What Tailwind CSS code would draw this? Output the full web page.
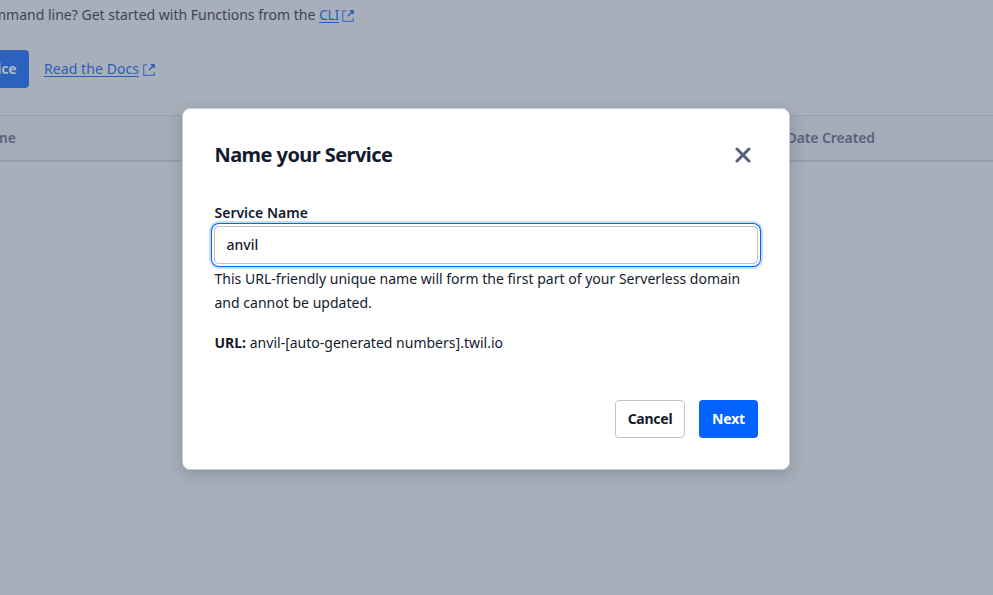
<!DOCTYPE html>
<html lang="en">
<head>
<meta charset="utf-8">
<title>Functions</title>
<script src="https://cdn.jsdelivr.net/npm/@tailwindcss/browser@4"></script>
</head>
<body class="relative h-[595px] w-[993px] overflow-hidden bg-[#a8afba] font-['Noto_Sans','Open_Sans',sans-serif] text-sm text-[#121c2d]">
<main class="flex flex-col whitespace-nowrap">
  <div class="flex h-[30px] items-center gap-[3px]">
    <p class="flex w-[339px] shrink-0 justify-end leading-5 text-[#3c455b]"><span>command line? Get started with Functions from the <a class="tracking-[-0.3px] text-[#2b5dba] underline underline-offset-2">CLI</a></span></p>
    <svg class="mt-0.5 size-3" viewBox="0 0 12 12" fill="none" stroke="#426ebd" stroke-width="1.2" stroke-linejoin="round"><path d="M4.2 .9H.7v10.4h10.6V7.9"/><path d="M7.8 .8h3.4v3.4M11 1 5.8 6.2" stroke="#2b5dba" stroke-width="1.4"/></svg>
  </div>
  <div class="mt-5 flex h-[38px] items-center">
    <div class="flex h-[38px] w-[29px] shrink-0 items-center justify-end overflow-hidden rounded-r bg-[#2b62bd] pr-[12.5px] font-bold tracking-[-0.2px] text-[#adb8cb]"><span>Service</span></div>
    <a class="ml-[15px] tracking-[0.08px] text-[#2b5dba] underline underline-offset-2"><span>Read the Docs</span></a>
    <svg class="ml-1 mt-0.5 size-3" viewBox="0 0 12 12" fill="none" stroke="#426ebd" stroke-width="1.2" stroke-linejoin="round"><path d="M4.2 .9H.7v10.4h10.6V7.9"/><path d="M7.8 .8h3.4v3.4M11 1 5.8 6.2" stroke="#2b5dba" stroke-width="1.4"/></svg>
  </div>
  <div class="mt-[27px] flex h-[47px] items-center border-t border-b-2 border-t-[#989fb2] border-b-[#989eb2] bg-[#a5abb8] font-semibold text-[#59627c]">
    <div class="flex w-4 shrink-0 justify-end"><span>Name</span></div>
    <div class="ml-[770.5px] tracking-[-0.1px]"><span>Date Created</span></div>
  </div>
</main>
<section role="dialog" class="absolute left-[182px] top-[108px] flex h-[362px] w-[608px] flex-col rounded-lg border border-[#cacdd8] bg-white px-[31px] pt-[30px] shadow-[0_4px_16px_rgba(18,28,45,0.2)] whitespace-nowrap">
  <header class="flex h-8 items-center justify-between pr-[7px] pl-[0.5px]">
    <h1 class="text-xl font-bold leading-8 tracking-[-0.57px]"><span>Name your Service</span></h1>
    <svg class="size-4" viewBox="0 0 16 16" fill="none" stroke="#56617e" stroke-width="3" stroke-linecap="round"><path d="m2 2 12 12M14 2 2 14"/></svg>
  </header>
  <label class="mt-8 h-5 pl-[0.5px] leading-5 font-semibold"><span>Service Name</span></label>
  <div class="mt-[3px] flex h-[38px] shrink-0 items-center rounded-[5px] border border-[#c2c3cf] pl-[11.5px] font-medium shadow-[0_0_0_2px_#ffffff,0_0_0_3px_#0263ff,0_0_0_5px_#c5dffb]"><span>anvil</span></div>
  <p class="mt-[3px] pl-[0.5px] leading-6 tracking-[0.015px]"><span>This URL-friendly unique name will form the first part of your Serverless domain</span><br><span>and cannot be updated.</span></p>
  <p class="mt-4 pl-[0.5px] leading-6 tracking-[0.01px]"><b>URL:</b> <span>anvil-[auto-generated numbers].twil.io</span></p>
  <footer class="mt-[45px] flex justify-end gap-3.5 font-semibold">
    <button class="h-[38px] w-[70px] rounded border border-[#c2c3cf] font-bold tracking-[-0.25px]"><span>Cancel</span></button>
    <button class="h-[38px] w-[59px] rounded bg-[#0263ff] font-bold tracking-[-0.2px] text-white"><span>Next</span></button>
  </footer>
</section>
</body>
</html>
